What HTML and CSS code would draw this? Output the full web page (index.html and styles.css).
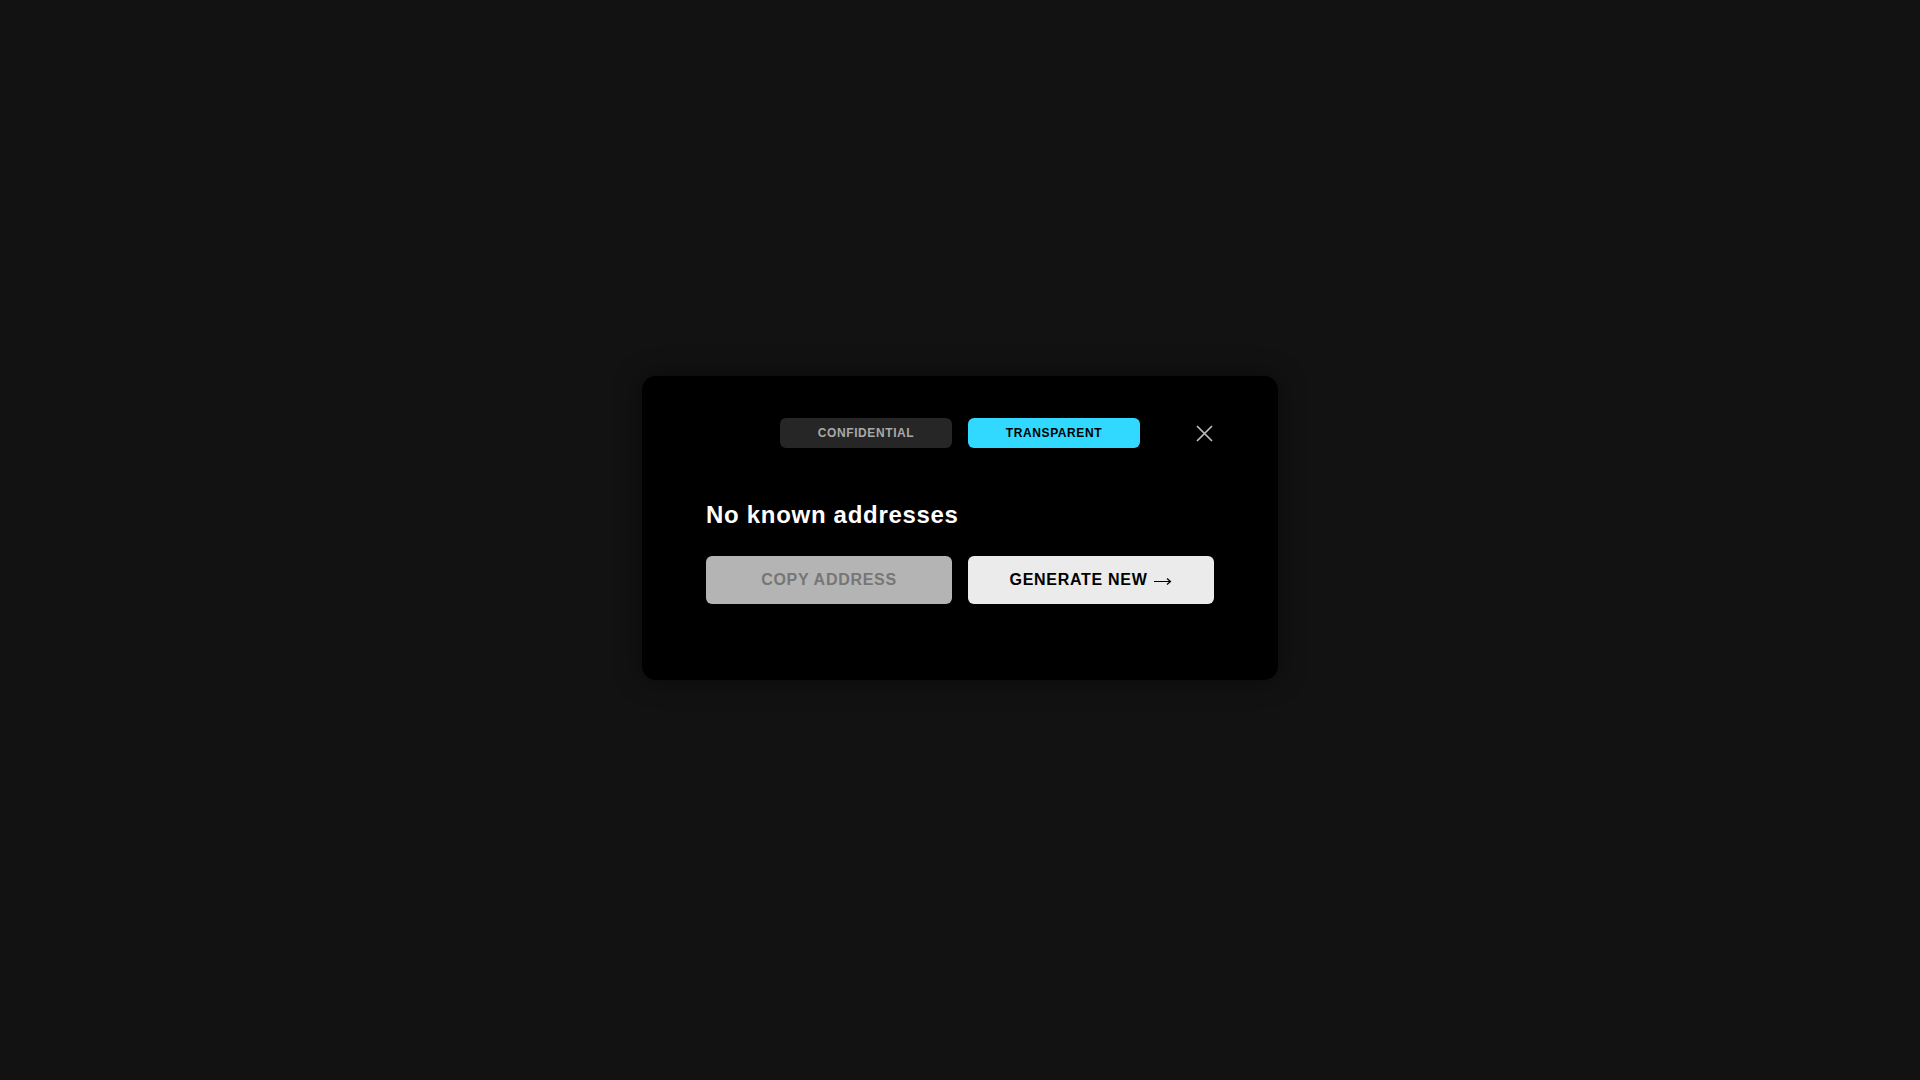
FILE: index.html
```html
<!DOCTYPE html>
<html lang="en">
<head>
<meta charset="utf-8">
<title>Receive</title>
<link rel="stylesheet" href="styles.css">
</head>
<body>
<div class="screen">
  <div class="modal">
    <div class="modal-head">
      <div class="tabs">
        <button class="tab">CONFIDENTIAL</button>
        <button class="tab tab-active">TRANSPARENT</button>
      </div>
      <button class="close" aria-label="Close">
        <svg width="17" height="17" viewBox="0 0 17 17"><path d="M1 1 L16 16 M16 1 L1 16" stroke="#bdbdbd" stroke-width="1.7" fill="none"/></svg>
      </button>
    </div>
    <h2 class="title">No known addresses</h2>
    <div class="actions">
      <button class="btn btn-disabled">COPY ADDRESS</button>
      <button class="btn btn-light">GENERATE NEW<svg class="arrow" width="19" height="10" viewBox="0 0 19 10"><path d="M1 5.5 H17.5 M14 2.5 L17.5 5.5 L14 8.5" stroke="#000" stroke-width="1.2" fill="none"/></svg></button>
    </div>
  </div>
</div>
</body>
</html>
```
FILE: styles.css
```css
html, body {
  margin: 0;
  padding: 0;
  background: #121212;
  font-family: "Liberation Sans", Arial, sans-serif;
}
.screen {
  height: 1080px;
  box-sizing: border-box;
  padding-bottom: 24px;
  display: flex;
  align-items: center;
  justify-content: center;
}
.modal {
  width: 636px;
  height: 304px;
  box-sizing: border-box;
  background: #000;
  border-radius: 14px;
  padding: 42px 64px 0 64px;
  box-shadow: 0 0 28px rgba(0, 0, 0, 0.45);
}
.modal-head {
  display: grid;
  grid-template-columns: 1fr auto 1fr;
  align-items: center;
}
.tabs {
  grid-column: 2;
  display: flex;
  gap: 16px;
}
.tab {
  width: 172px;
  height: 30px;
  border: 0;
  border-radius: 6px;
  background: #262626;
  color: #a9a9a9;
  font-family: "Liberation Sans", Arial, sans-serif;
  font-weight: 700;
  font-size: 12px;
  letter-spacing: 0.6px;
  padding: 0;
}
.tab-active {
  background: #31d8ff;
  color: #000;
}
.close {
  grid-column: 3;
  justify-self: end;
  width: 20px;
  height: 20px;
  padding: 0;
  border: 0;
  background: transparent;
  display: flex;
  align-items: center;
  justify-content: center;
}
.close svg {
  display: block;
}
.title {
  margin: 53px 0 0 0;
  color: #fff;
  font-size: 24px;
  line-height: 28px;
  font-weight: 700;
  letter-spacing: 0.7px;
}
.actions {
  margin-top: 27px;
  display: grid;
  grid-template-columns: 1fr 1fr;
  gap: 16px;
}
.btn {
  height: 48px;
  border: 0;
  border-radius: 6px;
  font-family: "Liberation Sans", Arial, sans-serif;
  font-weight: 700;
  font-size: 16px;
  letter-spacing: 0.7px;
  padding: 0;
  display: flex;
  align-items: center;
  justify-content: center;
}
.arrow {
  display: block;
  margin-left: 6px;
  margin-top: 1px;
}
.btn-disabled {
  background: #b4b4b4;
  color: #767676;
}
.btn-light {
  background: #ebebeb;
  color: #000;
}
```
